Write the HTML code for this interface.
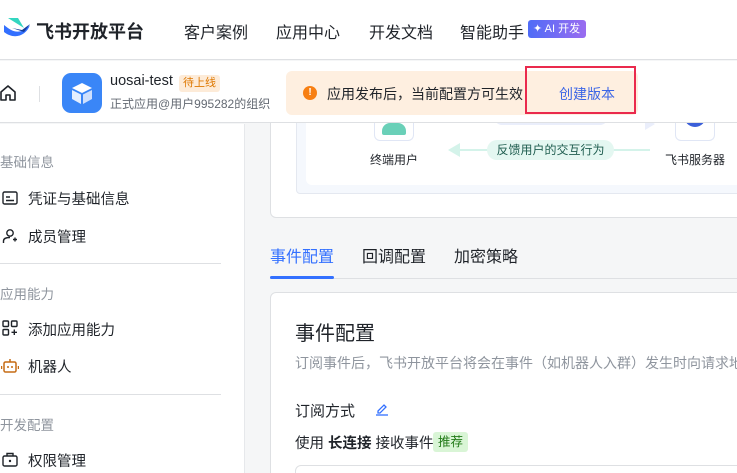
<!DOCTYPE html>
<html><head><meta charset="utf-8"><style>
*{box-sizing:border-box;margin:0;padding:0}
html,body{width:737px;height:473px;overflow:hidden}
body{background:#f5f6f7;font-family:"Liberation Sans","Noto Sans CJK SC",sans-serif;color:#1f2329;position:relative}
.a{position:absolute;white-space:nowrap}
</style></head><body>
<!-- top card partial -->
<div class="a" style="left:270px;top:100px;width:480px;height:118px;background:#fff;border:1px solid #dee0e3;border-radius:6px"></div>
<div class="a" style="left:296px;top:100px;width:460px;height:94px;background:#f5f8fd;border:1px solid #e4e8f0;border-radius:4px"></div>
<div class="a" style="left:306px;top:100px;width:440px;height:85px;background:#fff;border-radius:6px"></div>
<div class="a" style="left:374px;top:113px;width:40px;height:28px;border:1px solid #e0e6f5;border-top:none;border-radius:0 0 6px 6px;background:#fff"></div>
<div class="a" style="left:382px;top:123px;width:24px;height:12px;background:#6ad0b8;border-radius:8px 8px 2px 2px"></div>
<div class="a" style="left:675px;top:113px;width:40px;height:28px;border:1px solid #e0e6f5;border-top:none;border-radius:0 0 6px 6px;background:#fff"></div>
<div class="a" style="left:684px;top:115px;width:22px;height:12px;background:#3b5fd9;border-radius:0 0 12px 12px"></div>
<div class="a" style="left:494px;top:115px;width:114px;height:10px;background:#eaeefb;border-radius:0 0 8px 8px"></div>
<div class="a" style="left:645px;top:118px;width:0;height:0;border-top:6px solid transparent;border-bottom:6px solid transparent;border-left:10px solid #eaeefb"></div>
<div class="a" style="left:450px;top:149px;width:200px;height:2px;background:#d4f3ea"></div>
<div class="a" style="left:448px;top:143px;width:0;height:0;border-top:7px solid transparent;border-bottom:7px solid transparent;border-right:12px solid #d4f3ea"></div>
<div class="a" style="left:487px;top:140px;width:127px;height:20px;background:#e4f7f1;border-radius:10px;color:#1f5d4f;font-size:12px;line-height:20px;text-align:center">反馈用户的交互行为</div>
<div class="a" style="left:370px;top:151px;font-size:12px">终端用户</div>
<div class="a" style="left:665px;top:151px;font-size:12px">飞书服务器</div>
<!-- top nav -->
<div class="a" style="left:0;top:0;width:737px;height:60px;background:#fff;border-bottom:1px solid #dee0e3"></div>
<svg class="a" style="left:2px;top:16px" width="30" height="24" viewBox="0 0 30 24"><path d="M6 2 L16 2 L22 12 Z" fill="#33d6c0"/><path d="M2 9 C8 14 14 18 22 14 L28 9 C24 20 12 24 2 16 Z" fill="#3370ff"/><path d="M10 12 L20 14 L28 8 L22 16 Z" fill="#133c9a"/></svg>
<div class="a" style="left:36px;top:18px;font-size:18px;font-weight:bold;color:#1f2329">飞书开放平台</div>
<div class="a" style="left:184px;top:19px;font-size:16px">客户案例</div>
<div class="a" style="left:276px;top:19px;font-size:16px">应用中心</div>
<div class="a" style="left:369px;top:19px;font-size:16px">开发文档</div>
<div class="a" style="left:460px;top:19px;font-size:16px">智能助手</div>
<div class="a" style="left:528px;top:20px;height:18px;width:58px;border-radius:3px;background:linear-gradient(90deg,#4f6cf7,#9a6cf0);color:#fff;font-size:11px;line-height:18px;padding-left:5px">✦ AI 开发</div>
<!-- sub header -->
<div class="a" style="left:0;top:61px;width:737px;height:62px;background:#fff;border-bottom:1px solid #dee0e3"></div>
<svg class="a" style="left:0;top:84px" width="18" height="18" viewBox="0 0 18 18"><path d="M1 8 L8 2 L15 8 V16 H10 V11 H6 V16 H1 Z" fill="none" stroke="#1f2329" stroke-width="1.6" stroke-linejoin="round"/></svg>
<div class="a" style="left:39px;top:86px;width:1px;height:16px;background:#dee0e3"></div>
<div class="a" style="left:62px;top:73px;width:40px;height:40px;border-radius:9px;background:#3a86f7"></div>
<svg class="a" style="left:69px;top:80px" width="26" height="26" viewBox="0 0 26 26"><path d="M13 3 L23 8 L13 13 L3 8 Z" fill="#fff"/><path d="M3 10 L12 14.5 V24 L3 19 Z" fill="#e4eefe"/><path d="M23 10 L14 14.5 V24 L23 19 Z" fill="#cfe0fd"/></svg>
<div class="a" style="left:110px;top:73px;font-size:14.5px">uosai-test</div>
<div class="a" style="left:179px;top:75px;height:17px;padding:0 4px;background:#fdebd8;color:#de7802;font-size:11px;line-height:17px;border-radius:3px">待上线</div>
<div class="a" style="left:110px;top:95px;font-size:12px;color:#646a73">正式应用@用户995282的组织</div>
<div class="a" style="left:286px;top:71px;width:352px;height:44px;background:#feefe0;border-radius:6px"></div>
<div class="a" style="left:303px;top:86px;width:14px;height:14px;border-radius:50%;background:#f77f13;color:#fff;font-size:10px;font-weight:bold;text-align:center;line-height:14px">!</div>
<div class="a" style="left:327px;top:84px;font-size:14px">应用发布后，当前配置方可生效</div>
<div class="a" style="left:525px;top:66px;width:111px;height:48px;border:2px solid #ea2a4d"></div>
<div class="a" style="left:559px;top:84px;font-size:14px;color:#3c66e6">创建版本</div>
<!-- sidebar -->
<div class="a" style="left:0;top:124px;width:245px;height:349px;background:#fff;border-right:1px solid #e6e8eb"></div>
<div class="a" style="left:0;top:151px;font-size:13.5px;color:#8f959e">基础信息</div>
<svg class="a" style="left:2px;top:190px" width="16" height="16" viewBox="0 0 16 16"><rect x="1" y="2" width="14" height="12" rx="1.5" fill="none" stroke="#1f2329" stroke-width="1.4"/><path d="M4 7h4M4 10.5h8" stroke="#1f2329" stroke-width="1.4"/></svg>
<div class="a" style="left:28px;top:188px;font-size:14.5px">凭证与基础信息</div>
<svg class="a" style="left:2px;top:228px" width="16" height="16" viewBox="0 0 16 16"><circle cx="8" cy="5" r="3.2" fill="none" stroke="#1f2329" stroke-width="1.4"/><path d="M1.5 15 V13 C1.5 10.5 4 9.5 8 9.5 M11 11.5h4M13 9.5v4" fill="none" stroke="#1f2329" stroke-width="1.4"/></svg>
<div class="a" style="left:28px;top:226px;font-size:14.5px">成员管理</div>
<div class="a" style="left:0;top:263px;width:221px;height:1px;background:#dee0e3"></div>
<div class="a" style="left:0;top:283px;font-size:13.5px;color:#8f959e">应用能力</div>
<svg class="a" style="left:2px;top:320px" width="16" height="16" viewBox="0 0 16 16"><rect x="1" y="1" width="5.5" height="5.5" rx="1" fill="none" stroke="#1f2329" stroke-width="1.4"/><rect x="9.5" y="1" width="5.5" height="5.5" rx="1" fill="none" stroke="#1f2329" stroke-width="1.4"/><rect x="1" y="9.5" width="5.5" height="5.5" rx="1" fill="none" stroke="#1f2329" stroke-width="1.4"/><path d="M9.5 12.3h5.5M12.3 9.5v5.5" stroke="#1f2329" stroke-width="1.4"/></svg>
<div class="a" style="left:28px;top:319px;font-size:14.5px">添加应用能力</div>
<svg class="a" style="left:1px;top:358px" width="18" height="16" viewBox="0 0 18 16"><rect x="3" y="4" width="12" height="10" rx="1.5" fill="none" stroke="#c56b14" stroke-width="1.5"/><path d="M9 1v3M0.5 8v3M17.5 8v3" stroke="#c56b14" stroke-width="1.5"/><circle cx="7" cy="9" r="1" fill="#c56b14"/><circle cx="11" cy="9" r="1" fill="#c56b14"/></svg>
<div class="a" style="left:28px;top:356px;font-size:14.5px">机器人</div>
<div class="a" style="left:0;top:394px;width:221px;height:1px;background:#dee0e3"></div>
<div class="a" style="left:0;top:414px;font-size:13.5px;color:#8f959e">开发配置</div>
<svg class="a" style="left:2px;top:451px" width="16" height="16" viewBox="0 0 16 16"><rect x="1" y="5" width="14" height="10" rx="1.5" fill="none" stroke="#1f2329" stroke-width="1.4"/><path d="M5 5V2.5h6V5" fill="none" stroke="#1f2329" stroke-width="1.4"/><circle cx="8" cy="10" r="1.2" fill="#1f2329"/></svg>
<div class="a" style="left:28px;top:450px;font-size:14.5px">权限管理</div>
<!-- tabs -->
<div class="a" style="left:270px;top:243px;font-size:16px;color:#3370ff">事件配置</div>
<div class="a" style="left:362px;top:243px;font-size:16px">回调配置</div>
<div class="a" style="left:454px;top:243px;font-size:16px">加密策略</div>
<div class="a" style="left:270px;top:278px;width:467px;height:1px;background:#dee0e3"></div>
<div class="a" style="left:270px;top:276px;width:64px;height:3px;background:#3370ff;border-radius:2px"></div>
<!-- main card -->
<div class="a" style="left:270px;top:292px;width:480px;height:200px;background:#fff;border:1px solid #dee0e3;border-radius:6px"></div>
<div class="a" style="left:295px;top:317px;font-size:20px">事件配置</div>
<div class="a" style="left:295px;top:353px;font-size:14px;color:#8f959e">订阅事件后，飞书开放平台将会在事件（如机器人入群）发生时向请求地</div>
<div class="a" style="left:295px;top:400px;font-size:15px">订阅方式</div>
<svg class="a" style="left:375px;top:402px" width="14" height="14" viewBox="0 0 14 14"><path d="M3 9 L9 3 L11 5 L5 11 H3 Z" fill="none" stroke="#3370ff" stroke-width="1.3"/><path d="M1 13h12" stroke="#3370ff" stroke-width="1.3"/></svg>
<div class="a" style="left:295px;top:432px;font-size:14.5px">使用 <b>长连接</b> 接收事件</div>
<div class="a" style="left:433px;top:432px;height:20px;padding:0 5px;background:#d9f5d6;color:#237b19;font-size:12.5px;line-height:20px;border-radius:3px">推荐</div>
<div class="a" style="left:295px;top:465px;width:460px;height:20px;border:1px solid #dee0e3;border-radius:6px"></div>
</body></html>
